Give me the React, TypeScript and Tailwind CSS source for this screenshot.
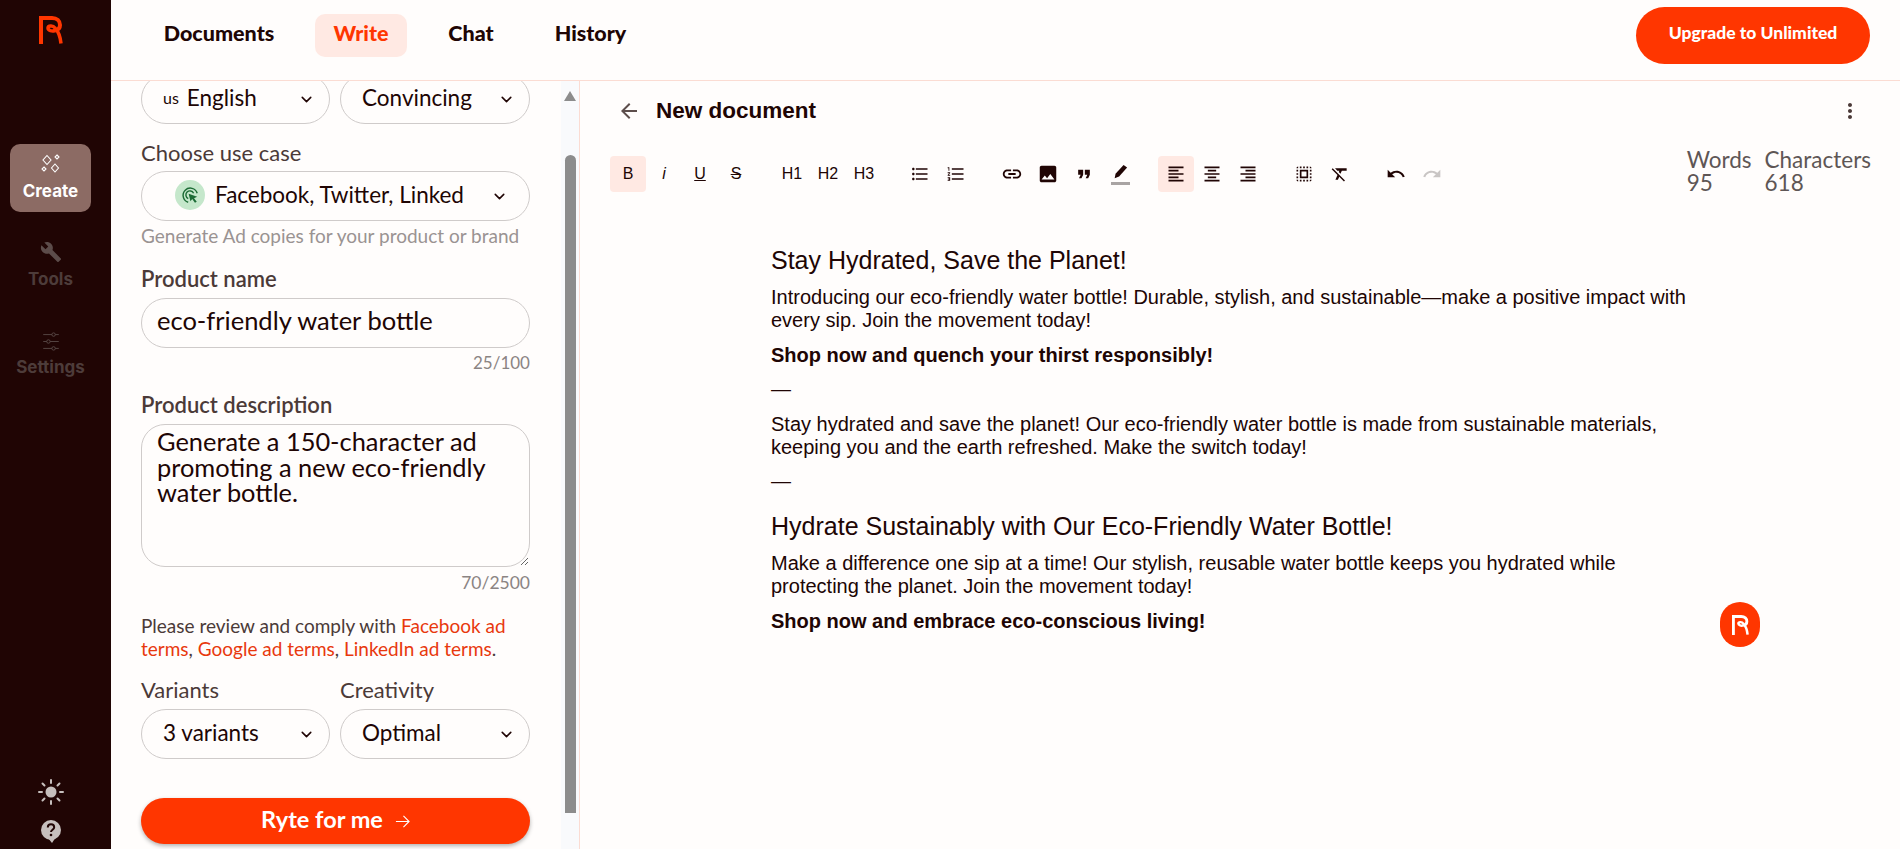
import type { ReactNode } from "react";
import { ChevronDown } from "lucide-react";
import {
  MdArrowBack,
  MdBuild,
  MdFormatAlignCenter,
  MdFormatAlignLeft,
  MdFormatAlignRight,
  MdFormatClear,
  MdFormatListBulleted,
  MdFormatListNumbered,
  MdFormatQuote,
  MdImage,
  MdLink,
  MdMoreVert,
  MdRedo,
  MdSelectAll,
  MdUndo,
} from "react-icons/md";

const ui = "font-['Lato',sans-serif]";

function Logo({ className, color }: { className: string; color: string }) {
  return (
    <svg viewBox="0 0 24 28" className={className} fill="none" stroke={color}>
      <path d="M2 28V2h11c5 0 8 3 8 7 0 3-2 5-5 5.500" strokeWidth="4" />
      <path d="M16 14.500c-3 1-7 0-7-2.500s5-3 7 0c3 3 5 6 6 15.500" strokeWidth="3.500" />
    </svg>
  );
}

function Sparkles() {
  return (
    <svg viewBox="0 0 20 22" className="h-[22px] w-[20px]" fill="none" stroke="#fff" strokeWidth="1.100">
      <path d="M6 2.500l4 4.500-4 4.500-4-4.500z" />
      <path d="M16 2l2 2-2 2-2-2z" />
      <path d="M14 11l3.500 4-3.500 4-3.500-4z" />
      <path d="M3 14l2 2-2 2-2-2z" />
    </svg>
  );
}

function Sliders() {
  return (
    <svg viewBox="0 0 20 22" className="h-[19px] w-[18px]" fill="none" stroke="#5c4c4a" strokeWidth="1">
      <path d="M1 3h10M15 3h4M1 11h4M9 11h10M1 19h10M15 19h4" />
      <circle cx="13" cy="3" r="2" />
      <circle cx="7" cy="11" r="2" />
      <circle cx="13" cy="19" r="2" />
    </svg>
  );
}

function Sun() {
  return (
    <svg viewBox="0 0 26 26" className="h-[26px] w-[26px]" fill="#c6bfbd" stroke="#c6bfbd" strokeWidth="2" strokeLinecap="round">
      <circle cx="13" cy="13" r="5.500" stroke="none" />
      <path d="M13 1v3M13 22v3M1 13h3M22 13h3M4.500 4.500l2 2M19.500 19.500l2 2M4.500 21.500l2-2M19.500 6.500l2-2" />
    </svg>
  );
}

function HelpBubble() {
  return (
    <svg viewBox="0 0 20 23" className="h-[23px] w-[20px]">
      <circle cx="10" cy="10" r="10" fill="#c6bfbd" />
      <path d="M7 18l4 5 4-6z" fill="#c6bfbd" />
      <path d="M6.800 7.500c0-2 1.400-3.200 3.200-3.200s3.200 1.200 3.200 3c0 2.300-3.200 2.500-3.200 4.700" fill="none" stroke="#200504" strokeWidth="2" />
      <circle cx="10" cy="15" r="1.300" fill="#200504" />
    </svg>
  );
}

function TargetCursor() {
  return (
    <svg viewBox="0 0 20 20" className="h-[18px] w-[18px]" fill="none" stroke="#1c6b35" strokeWidth="1.600">
      <path d="M8 18a8 8 0 1 1 10-10" />
      <path d="M8 14a4.500 4.500 0 1 1 6-6" />
      <path d="M8.500 8.500l9.500 3.500-3.500 1.500 3 4-2 1-3-4-2 2.500z" fill="#1c6b35" stroke="none" />
    </svg>
  );
}

function Pen() {
  return (
    <span className="flex flex-col items-center">
      <svg viewBox="0 0 20 18" className="h-[16px] w-[18px]" fill="#200504">
        <path d="M4 16l1-5L14 1l4 3-9 10z" />
      </svg>
      <span className="mt-[2px] h-[3px] w-[19px] bg-[#a9a4a3]" />
    </span>
  );
}

function NavLink({ label, className, active }: { label: string; className: string; active?: boolean }) {
  return (
    <span
      className={`flex h-[43px] items-center justify-center rounded-[10px] pb-[4px] text-[21.500px] font-black ${className} ${
        active ? "bg-[#ffe9e3] text-[#ff3600]" : "text-[#200504]"
      }`}
    >
      {label}
    </span>
  );
}

function RailItem({ icon, label, active }: { icon: ReactNode; label: string; active?: boolean }) {
  return (
    <div
      className={`mx-[10px] flex h-[68px] w-[81px] flex-col items-center justify-center rounded-[10px] ${
        active ? "bg-[#8c6b64] text-white" : "text-[#4d3c3a]"
      }`}
    >
      {icon}
      <span className="mt-[4px] font-['Inter',sans-serif] text-[17px] leading-[24px] font-bold">{label}</span>
    </div>
  );
}

function Select({ children, className = "" }: { children: ReactNode; className?: string }) {
  return (
    <div
      className={`flex h-[50px] items-center justify-between rounded-full border border-[#cfcbca] pr-[14px] pl-[21px] text-[22.500px] text-[#200504] ${className}`}
    >
      <span className="flex items-center pb-[3px]">{children}</span>
      <ChevronDown size={17} strokeWidth={2.200} color="#200504" className="shrink-0" />
    </div>
  );
}

function ToolButton({ children, active }: { children: ReactNode; active?: boolean }) {
  return (
    <span
      className={`flex h-[36px] w-[36px] items-center justify-center rounded-[4px] text-[16px] text-[#200504] ${
        active ? "bg-[#ffe9e3]" : ""
      }`}
    >
      {children}
    </span>
  );
}

function Para({ children, className = "mt-[12px]" }: { children: ReactNode; className?: string }) {
  return <p className={`text-[20px] leading-[23px] ${className}`}>{children}</p>;
}

function Bold({ children }: { children: ReactNode }) {
  return <p className="mt-[12px] text-[20px] leading-[23px] font-bold">{children}</p>;
}

function Heading({ children, className = "" }: { children: ReactNode; className?: string }) {
  return <h2 className={`text-[25px] leading-[28px] ${className}`}>{children}</h2>;
}

export default function App() {
  return (
    <div className={`flex h-[849px] w-[1900px] overflow-hidden bg-[#fffdfc] ${ui}`}>
      <aside className="flex w-[111px] shrink-0 flex-col bg-[#200504]">
        <div className="flex h-[144px] justify-center pt-[16px] pr-[9px]">
          <Logo className="h-[28px] w-[24px]" color="#ff3600" />
        </div>
        <RailItem icon={<Sparkles />} label="Create" active />
        <div className="mt-[20px]">
          <RailItem icon={<MdBuild size={22} color="#5c4c4a" />} label="Tools" />
        </div>
        <div className="mt-[21px]">
          <RailItem icon={<Sliders />} label="Settings" />
        </div>
        <div className="mt-auto flex flex-col items-center gap-[15px] pr-[9px] pb-[6px]">
          <Sun />
          <HelpBubble />
        </div>
      </aside>

      <div className="flex min-w-0 flex-1 flex-col">
        <header className="flex h-[81px] shrink-0 items-start justify-between border-b border-[#fbdcd3] pt-[7px] pr-[30px] pl-[32px]">
          <nav className="mt-[7px] flex gap-5">
            <NavLink label="Documents" className="w-[152px]" />
            <NavLink label="Write" className="w-[92px]" active />
            <NavLink label="Chat" className="w-[88px]" />
            <NavLink label="History" className="w-[111px]" />
          </nav>
          <button className="flex h-[57px] w-[234px] items-center justify-center rounded-full bg-[#ff3600] pb-[4px] text-[17.500px] font-black text-white">
            Upgrade to Unlimited
          </button>
        </header>

        <div className="flex min-h-0 flex-1">
          <section className="flex w-[469px] shrink-0 overflow-hidden border-r border-[#fbdcd3]">
            <div className="w-[450px] shrink-0 pr-[31px] pl-[30px]">
              <div className="-mt-[7px] grid grid-cols-[189px_190px] gap-[10px]">
                <Select>
                  <span className="mr-[8px] text-[16px]">us</span>
                  English
                </Select>
                <Select>Convincing</Select>
              </div>

              <label className="mt-[17px] mb-[6px] block text-[22px] leading-[24px] text-[#4b3a38]">Choose use case</label>
              <Select className="pr-[21px] pl-[33px]">
                <span className="mr-[10px] flex h-[30px] w-[30px] items-center justify-center rounded-full bg-[#c5e7cb]">
                  <TargetCursor />
                </span>
                Facebook, Twitter, Linked
              </Select>
              <p className="mt-[4px] text-[19px] leading-[22px] text-[#9a9392]">Generate Ad copies for your product or brand</p>

              <label className="mt-[20px] mb-[7px] block text-[22px] leading-[24px] font-semibold text-[#4b3a38]">Product name</label>
              <input
                readOnly
                value="eco-friendly water bottle"
                className="block h-[50px] w-full rounded-full border border-[#cfcbca] px-[15px] pb-[6px] text-[25.500px] text-[#200504] outline-none"
              />
              <p className="mt-[5px] text-right text-[17px] leading-[20px] text-[#8b8483]">25/100</p>

              <label className="mt-[20px] mb-[7px] block text-[22px] leading-[24px] font-semibold text-[#4b3a38]">Product description</label>
              <textarea
                readOnly
                value="Generate a 150-character ad promoting a new eco-friendly water bottle."
                className="block h-[143px] w-full rounded-[24px] border border-[#cfcbca] px-[15px] pt-[4px] text-[25.400px] leading-[25.500px] text-[#200504] outline-none"
              />
              <p className="mt-[6px] text-right text-[17.500px] leading-[20px] text-[#8b8483]">70/2500</p>

              <p className="mt-[21px] text-[19px] leading-[23px] text-[#4b3a38]">
                Please review and comply with <span className="text-[#e8380d]">Facebook ad</span>{" "}
                <span className="text-[#e8380d]">terms</span>, <span className="text-[#e8380d]">Google ad terms</span>,{" "}
                <span className="text-[#e8380d]">LinkedIn ad terms</span>.
              </p>

              <div className="mt-[18px] grid grid-cols-[189px_190px] gap-x-[10px] gap-y-[7px] text-[22px] leading-[24px] text-[#4b3a38]">
                <label>Variants</label>
                <label>Creativity</label>
                <Select>3 variants</Select>
                <Select>Optimal</Select>
              </div>

              <button className="mt-[39px] flex h-[46px] w-full items-center justify-center gap-[12px] rounded-full bg-[#ff3600] pb-[2px] text-[23.500px] font-bold text-white shadow-[0_2px_4px_rgba(0,0,0,0.3)]">
                Ryte for me
                <svg viewBox="0 0 16 16" className="mt-[2px] h-[15px] w-[15px]" fill="none" stroke="#fff" strokeWidth="1.200">
                  <path d="M1 8h14M9 2l6 6-6 6" />
                </svg>
              </button>
            </div>
            <div className="flex w-[18px] shrink-0 flex-col items-center bg-[#f9fafc]">
              <span className="mt-[10px] h-0 w-0 border-x-[6.500px] border-b-[10px] border-x-transparent border-b-[#8c8c8c]" />
              <span className="mt-[54px] h-[658px] w-[11px] rounded-t-full rounded-b-[6px] bg-[#8c8c8c]" />
            </div>
          </section>

          <main className="relative min-w-0 flex-1 font-['Liberation_Sans',sans-serif] text-[#200504]">
            <div className="flex h-[60px] items-center justify-between pr-[38px] pl-[37px]">
              <div className="flex items-center">
                <MdArrowBack size={24} color="#5d4e4c" className="mr-[15px]" />
                <h1 className="text-[22.500px] font-bold">New document</h1>
              </div>
              <MdMoreVert size={24} color="#4b3a38" />
            </div>

            <div className="mt-[7px] flex items-start justify-between pr-[29px] pl-[30px]">
              <div className="mt-[8px] flex gap-[20px]">
                <div className="flex">
                  <ToolButton active>B</ToolButton>
                  <ToolButton><i>i</i></ToolButton>
                  <ToolButton><u>U</u></ToolButton>
                  <ToolButton><s>S</s></ToolButton>
                </div>
                <div className="flex">
                  <ToolButton>H1</ToolButton>
                  <ToolButton>H2</ToolButton>
                  <ToolButton>H3</ToolButton>
                </div>
                <div className="flex">
                  <ToolButton><MdFormatListBulleted size={20} /></ToolButton>
                  <ToolButton><MdFormatListNumbered size={20} /></ToolButton>
                </div>
                <div className="flex">
                  <ToolButton><MdLink size={22} /></ToolButton>
                  <ToolButton><MdImage size={22} /></ToolButton>
                  <ToolButton><MdFormatQuote size={20} /></ToolButton>
                  <ToolButton><Pen /></ToolButton>
                </div>
                <div className="flex">
                  <ToolButton active><MdFormatAlignLeft size={20} /></ToolButton>
                  <ToolButton><MdFormatAlignCenter size={20} /></ToolButton>
                  <ToolButton><MdFormatAlignRight size={20} /></ToolButton>
                </div>
                <div className="flex">
                  <ToolButton><MdSelectAll size={20} /></ToolButton>
                  <ToolButton><MdFormatClear size={20} /></ToolButton>
                </div>
                <div className="flex">
                  <ToolButton><MdUndo size={20} /></ToolButton>
                  <ToolButton><MdRedo size={20} color="#c9c5c4" /></ToolButton>
                </div>
              </div>
              <div className={`flex gap-[13px] text-[22.500px] leading-[23px] text-[#5e5655] ${ui}`}>
                <div>Words<br />95</div>
                <div>Characters<br />618</div>
              </div>
            </div>

            <article className="mt-[52px] ml-[191px] w-[922px]">
              <Heading>Stay Hydrated, Save the Planet!</Heading>
              <Para>
                Introducing our eco-friendly water bottle! Durable, stylish, and sustainable—make a positive impact with every sip. Join the movement today!
              </Para>
              <Bold>Shop now and quench your thirst responsibly!</Bold>
              <Para className="mt-[11px]">—</Para>
              <Para>
                Stay hydrated and save the planet! Our eco-friendly water bottle is made from sustainable materials, keeping you and the earth refreshed. Make the switch today!
              </Para>
              <Para className="mt-[11px]">—</Para>
              <Heading className="mt-[19px]">Hydrate Sustainably with Our Eco-Friendly Water Bottle!</Heading>
              <Para>
                Make a difference one sip at a time! Our stylish, reusable water bottle keeps you hydrated while protecting the planet. Join the movement today!
              </Para>
              <Bold>Shop now and embrace eco-conscious living!</Bold>
            </article>

            <span className="absolute top-[521px] left-[1140px] flex h-[45px] w-[40px] items-center justify-center rounded-full bg-[#ff3600]">
              <Logo className="h-[20px] w-[17px]" color="#fff" />
            </span>
          </main>
        </div>
      </div>
    </div>
  );
}
